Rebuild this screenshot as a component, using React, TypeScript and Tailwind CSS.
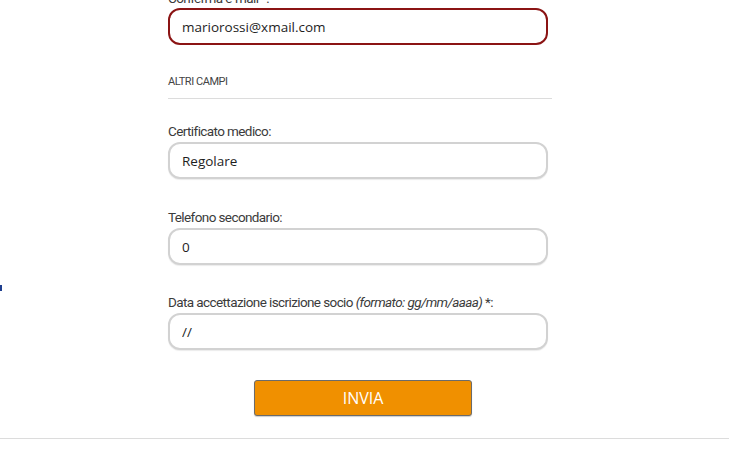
import React from 'react';

const labelCls = "block h-4 leading-4 text-[13.5px] tracking-[-0.6px] text-[#3b3b3b] font-['Roboto',sans-serif]";
const inputCls =
    "block w-[380px] h-[37px] rounded-[12px] border-2 bg-white px-[12px] text-[13.5px] text-[#1e1e1e] font-['Open_Sans',sans-serif] outline-none";

const Field = ({ label, value, className = '' }: { label: React.ReactNode; value: string; className?: string }) => (
    <div className={className}>
        <label className={labelCls}>{label}</label>
        <input
            readOnly
            value={value}
            className={`${inputCls} mt-[3px] border-[#d2d2d2] shadow-[0_1px_1px_rgba(0,0,0,0.08)]`}
        />
    </div>
);

const App = () => {
    return (
        <div className="relative w-[729px] h-[451px] overflow-hidden bg-white">
            {/* stray mark at the left edge */}
            <div className="absolute left-0 top-[285px] w-[2px] h-[6px] bg-[#1f3f8f]" />

            <div className="ml-[168px] w-[384px]">
                <div className="mt-[-10px]">
                    <label className={labelCls}>Conferma e-mail *:</label>
                    <input
                        readOnly
                        value="mariorossi@xmail.com"
                        className={`${inputCls} mt-[2px] border-[#8b1414]`}
                    />
                </div>

                <div className="mt-[30px] border-b border-[#dcdcdc] pb-[9px]">
                    <span className="block h-[14px] leading-[14px] text-[11px] tracking-[-0.45px] uppercase text-[#444] font-['Roboto',sans-serif]">
                        Altri campi
                    </span>
                </div>

                <Field className="mt-[24px]" label="Certificato medico:" value="Regolare" />
                <Field className="mt-[30px]" label="Telefono secondario:" value="0" />
                <Field
                    className="mt-[29px]"
                    label={
                        <>
                            Data accettazione iscrizione socio <i>(formato: gg/mm/aaaa)</i> *:
                        </>
                    }
                    value="//"
                />
            </div>

            <div className="flex justify-start pl-[254px] mt-[30px]">
                <button className="w-[218px] h-[36px] rounded-[3px] border border-[#6b6b6b] bg-[#f09000] text-white text-[16px] font-['Open_Sans',sans-serif] shadow-[0_1px_1px_rgba(0,0,0,0.2)]">
                    INVIA
                </button>
            </div>

            <div className="mt-[22px] border-t border-[#dcdcdc]" />
        </div>
    );
};

export default App;
